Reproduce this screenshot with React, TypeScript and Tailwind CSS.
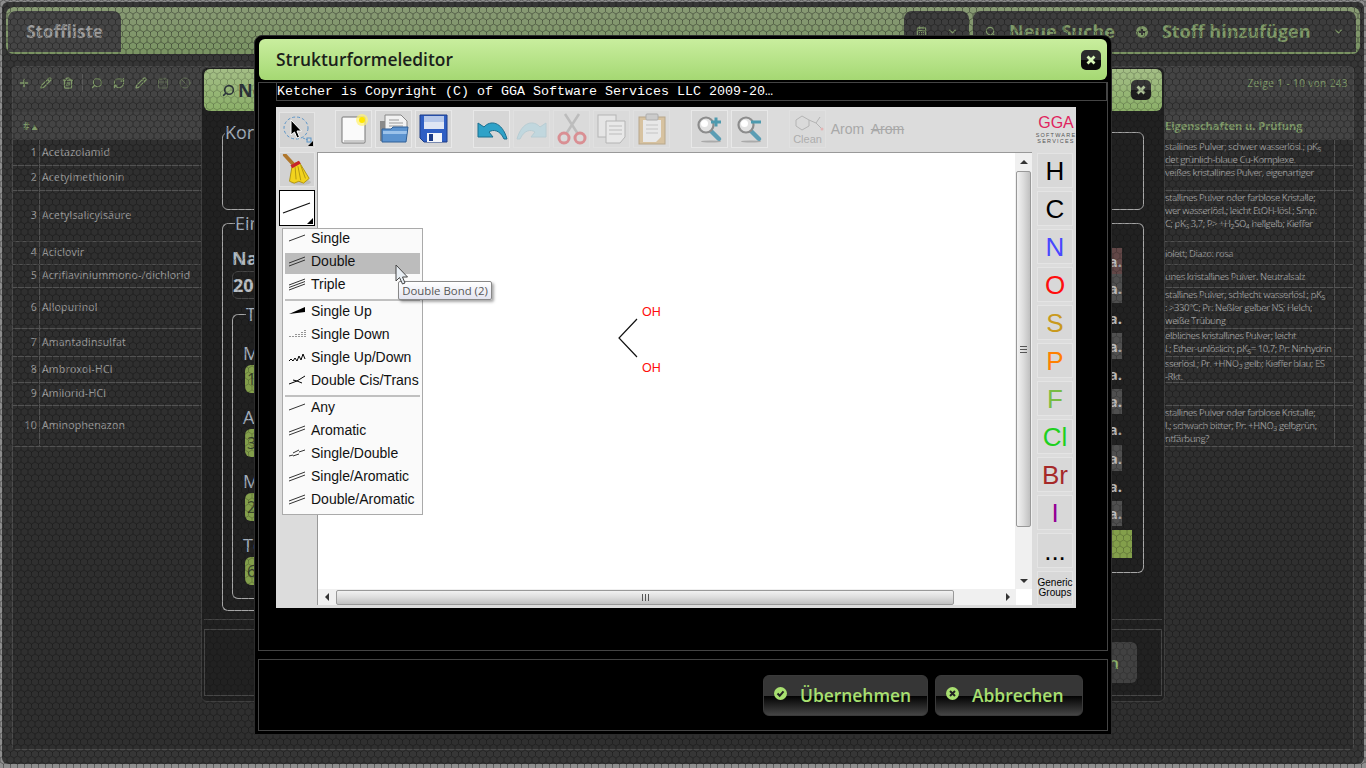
import type { ReactNode } from 'react';
import { Plus, Pencil, Trash2, Search, RefreshCw, CalendarDays, Ban, ChevronDown } from 'lucide-react';

const ROW_HEIGHTS = [26, 25, 51, 23, 23, 41, 28, 26, 23, 41];

const SUBSTANCES = [
  'Acetazolamid',
  'Acetylmethionin',
  'Acetylsalicylsäure',
  'Aciclovir',
  'Acriflaviniummono-/dichlorid',
  'Allopurinol',
  'Amantadinsulfat',
  'Ambroxol-HCl',
  'Amilorid-HCl',
  'Aminophenazon',
];

const Sub = ({ children }: { children: ReactNode }) => (
  <sub className="text-[7px] leading-none">{children}</sub>
);

const PROPERTIES: ReactNode[] = [
  <>
    <div>stallines Pulver; schwer wasserlösl.; pK<Sub>S</Sub></div>
    <div>det grünlich-blaue Cu-Komplexe.</div>
  </>,
  <div>veißes kristallines Pulver, eigenartiger</div>,
  <>
    <div>stallines Pulver oder farblose Kristalle;</div>
    <div>wer wasserlösl.; leicht EtOH-lösl.; Smp:</div>
    <div>C; pK<Sub>S</Sub> 3,7; P&gt; +H<Sub>2</Sub>SO<Sub>4</Sub> hellgelb; Kieffer</div>
  </>,
  <div>iolett; Diazo: rosa</div>,
  <div>unes kristallines Pulver. Neutralsalz</div>,
  <>
    <div>stallines Pulver; schlecht wasserlösl.; pK<Sub>S</Sub></div>
    <div>: &gt;330°C; Pr: Neßler gelber NS; Helch;</div>
    <div>weiße Trübung</div>
  </>,
  <>
    <div>elbliches kristallines Pulver; leicht</div>
    <div>l.; Ether-unlöslich; pK<Sub>S</Sub>= 10,7; Pr: Ninhydrin</div>
  </>,
  <>
    <div>sserlösl.; Pr. +HNO<Sub>3</Sub> gelb; Kieffer blau; ES</div>
    <div>-Rkt.</div>
  </>,
  null,
  <>
    <div>stallines Pulver oder farblose Kristalle;</div>
    <div>l.; schwach bitter; Pr: +HNO<Sub>3</Sub> gelbgrün;</div>
    <div>ntfärbung?</div>
  </>,
];

// rows of the right hand fieldset in the dialog behind the editor
const NA_ROWS = [
  { h: 'h-[26px]', chip: 'bg-[#6a4444]' },
  { h: 'h-[29px]', chip: 'bg-[#505050]' },
  { h: 'h-[30px]', chip: '' },
  { h: 'h-[26px]', chip: 'bg-[#505050]' },
  { h: 'h-[30px]', chip: '' },
  { h: 'h-[25px]', chip: 'bg-[#505050]' },
  { h: 'h-[31px]', chip: '' },
  { h: 'h-[26px]', chip: 'bg-[#505050]' },
  { h: 'h-[30px]', chip: '' },
  { h: 'h-[25px]', chip: 'bg-[#505050]' },
];

const AMOUNTS = [
  { label: 'M', value: '1' },
  { label: 'A', value: '3' },
  { label: 'M', value: '2' },
  { label: 'To', value: '6' },
];

function HexOverlay({ id }: { id: string }) {
  return (
    <svg className="absolute inset-0 w-full h-full pointer-events-none">
      <defs>
        <pattern id={id} patternUnits="userSpaceOnUse" width="7" height="12">
          <path d="M3.5 0 L7 2 V6 L3.5 8 L0 6 V2 Z M3.5 8 V12" fill="none" stroke="#000" strokeOpacity="0.2" strokeWidth="1" />
        </pattern>
      </defs>
      <rect width="100%" height="100%" fill="#505050" fillOpacity="0.3" />
      <rect width="100%" height="100%" fill={`url(#${id})`} />
    </svg>
  );
}

function CloseButton() {
  return (
    <div className="w-[20px] h-[20px] rounded-[5px] bg-[linear-gradient(#2c2c2c_50%,#0a0a0a_50%)] flex items-center justify-center">
      <svg width="12" height="12" viewBox="0 0 12 12">
        <path d="M2.5 2.5 L9.5 9.5 M9.5 2.5 L2.5 9.5" stroke="#d8f5b8" strokeWidth="2.8" />
      </svg>
    </div>
  );
}

function RoundIcon({ kind }: { kind: 'check' | 'x' }) {
  return (
    <svg width="13" height="13" viewBox="0 0 13 13" className="shrink-0 -mt-[3px]">
      <circle cx="6.5" cy="6.5" r="6.5" fill="#a8e070" />
      {kind === 'check' ? (
        <path d="M3.5 6.5 L5.7 8.8 L9.5 4.3" fill="none" stroke="#222" strokeWidth="2" />
      ) : (
        <path d="M4 4 L9 9 M9 4 L4 9" fill="none" stroke="#222" strokeWidth="2" />
      )}
    </svg>
  );
}

function BaseLayer() {
  return (
    <div className="m-[2px] h-[762px] rounded-md bg-[#1c1c1c] px-[4px] pt-[4px] flex flex-col">
      <div className="h-[47px] mt-[1px] rounded-lg bg-linear-to-b from-[#c4e89c] to-[#a8dc78] flex items-stretch pl-[2px] pr-[4px] pt-[4px] pb-[2px]">
        <div className="w-[113px] rounded-t-lg bg-[#3c3c3c] text-[#f0f0f0] text-[17px] font-bold flex items-center justify-center">
          Stoffliste
        </div>
        <div className="flex-1" />
        <div className="w-[65px] rounded-t-lg bg-[#2a2a2a] flex items-center justify-center gap-[20px] text-[#b4e884]">
          <CalendarDays size={11} strokeWidth={2.5} />
          <ChevronDown size={11} strokeWidth={3} />
        </div>
        <div className="w-[383px] ml-[4px] rounded-t-lg bg-[#2a2a2a] flex items-center text-[#b4e884] font-bold text-[18px] pl-[12px]">
          <Search size={11} strokeWidth={2.5} />
          <span className="ml-[13px]">Neue Suche</span>
          <svg width="12" height="12" viewBox="0 0 12 12" className="ml-[21px]">
            <circle cx="6" cy="6" r="6" fill="#b4e884" />
            <path d="M3 6 H9 M6 3 V9" stroke="#222" strokeWidth="2" />
          </svg>
          <span className="ml-[14px]">Stoff hinzufügen</span>
          <ChevronDown size={11} strokeWidth={3} className="ml-auto mr-[12px]" />
        </div>
      </div>

      <div className="mt-[12px] ml-[6px] mr-[6px] h-[684px] border border-[#4a4a4a] rounded-sm flex flex-col">
        <div className="h-[32px] bg-[#3a3a3a] flex items-center pl-[5px] gap-[10px] text-[#b4e884] relative">
          <Plus size={12} strokeWidth={3} />
          <Pencil size={12} strokeWidth={2.5} />
          <Trash2 size={12} strokeWidth={2.5} />
          <div className="w-px h-[18px] bg-[#666666] -mx-[2px]" />
          <Search size={12} strokeWidth={2.5} className="-scale-x-100" />
          <RefreshCw size={12} strokeWidth={2.5} />
          <Pencil size={12} strokeWidth={2.5} />
          <CalendarDays size={12} strokeWidth={2} className="opacity-50" />
          <Ban size={12} strokeWidth={2} className="opacity-50" />
          <span className="ml-auto mr-[5px] text-[10px] tracking-[0.4px] font-normal">Zeige 1 - 10 von 243</span>
        </div>
        <div className="h-[13px] bg-[#303030]" />
        <div className="h-[28px] bg-[#3a3a3a] flex items-center text-[#b4e884] text-[10px] font-semibold">
          <div className="w-[27px] pl-[10px]"># ▴</div>
          <div className="w-[1125px] h-full" />
          <div className="w-[170px] text-[11px] font-bold whitespace-nowrap">Eigenschaften u. Prüfung</div>
        </div>
        <div className="flex-1 flex flex-col bg-[#0e0e0e]">
          {SUBSTANCES.map((name, i) => (
            <div
              key={name}
              style={{ height: ROW_HEIGHTS[i] }}
              className="flex items-stretch border-b border-[#555555] box-border shrink-0"
            >
              <div className="w-[27px] shrink-0 border-r border-[#555555] flex items-center justify-end pr-[2px] text-[10.5px] text-[#eeeeee] tracking-[0.3px]">
                {i + 1}
              </div>
              <div className="w-[1125px] shrink-0 flex items-center pl-[2px] text-[10.5px] text-[#eeeeee] tracking-[0.2px]">
                {name}
              </div>
              <div className={`w-[170px] shrink-0 border-r border-[#555555] flex flex-col ${i === 3 || i === 4 ? 'justify-center' : 'justify-start'} text-[9.5px] leading-[13px] tracking-[-0.45px] text-[#e4e4e4] whitespace-nowrap`}>
                {PROPERTIES[i]}
              </div>
            </div>
          ))}
        </div>
      </div>
    </div>
  );
}

function SubstanceDialog() {
  return (
    <div className="absolute left-[201px] top-[67px] w-[964px] h-[635px] rounded-md border border-[#3a3a3a] bg-[#0e0e0e] flex flex-col px-[2px] pt-[1px]">
      <div className="h-[42px] shrink-0 rounded-md bg-linear-to-b from-[#c9ee9e] to-[#a5d873] flex items-center pl-[18px] pr-[6px] text-[#1f2a33] text-[18px] font-bold">
        <Search size={13} strokeWidth={3} className="-scale-x-100 mr-[3px]" />
        <span>Neuer Stoff</span>
        <div className="ml-auto mr-[5px]">
          <CloseButton />
        </div>
      </div>

      <div className="h-[509px] border-b border-[#444444] px-[18px] pt-[10px] shrink-0 text-[#c8d8ea]">
        <fieldset className="h-[89px] border border-[#cccccc] rounded-md">
          <legend className="ml-[2px] text-[18px] leading-[22px]">Korrektur</legend>
        </fieldset>
        <div className="mt-[2px] flex items-start">
          <fieldset className="w-[478px] h-[399px] border border-r-0 border-[#cccccc] rounded-l-md pl-[9px]">
            <legend className="ml-[3px] text-[18px] leading-[22px]">Ein</legend>
            <div className="mt-[13px] text-[18px] leading-[22px] font-bold text-[#dde8f2]">Na</div>
            <div className="mt-[2px] h-[28px] border border-[#444444] rounded-md text-[18px] font-bold text-[#e8f0f8] flex items-center">
              20
            </div>
            <fieldset className="mt-[4px] h-[296px] border border-r-0 border-[#cccccc] rounded-l-md pl-[10px] pt-[17px]">
              <legend className="ml-[3px] text-[18px] leading-[22px]">To</legend>
              {AMOUNTS.map(a => (
                <div key={a.label + a.value} className="h-[64px]">
                  <div className="text-[18px] leading-[22px]">{a.label}</div>
                  <div className="mt-[1px] ml-[2px] w-[40px] h-[28px] rounded-md bg-[#9ac24a] text-[#30401a] text-[16px] leading-[28px] pl-[2px]">
                    {a.value}
                  </div>
                </div>
              ))}
            </fieldset>
          </fieldset>
          <fieldset className="flex-1 h-[361px] border border-l-0 border-[#cccccc] rounded-r-md pr-[21px] pt-[14px]">
            <legend className="text-[18px] leading-[22px] invisible">Ein</legend>
            {NA_ROWS.map((r, i) => (
              <div key={i} className={`${r.h} flex justify-end items-center`}>
                <div className={`${r.chip} h-full w-[40px] text-right text-[15px] font-bold text-[#e8e8e8] flex items-center justify-end`}>
                  n.a.
                </div>
              </div>
            ))}
            <div className="flex justify-end mt-[4px] -mr-[10px]">
              <div className="w-[40px] h-[28px] bg-[#9ac24a]" />
            </div>
          </fieldset>
        </div>
      </div>

      <div className="mt-[9px] h-[67px] border border-[#444444] flex items-center justify-end pr-[24px]">
        <div className="w-[120px] h-[41px] rounded-md bg-[#3c3c3c] text-[#a8dc78] text-[17px] font-semibold flex items-center justify-end pr-[18px]">
          Speichern
        </div>
      </div>
    </div>
  );
}

function ToolButton({ children, faded, className }: { children: ReactNode; faded?: boolean; className?: string }) {
  return (
    <div className={`w-[37px] h-[38px] border ${faded ? 'border-[#e0e0e0] bg-[#dadada]' : 'border-[#e8e8e8] bg-[#d6d6d6]'} flex items-center justify-center shrink-0 ${className ?? ''}`}>
      <div className={faded ? 'opacity-45 flex flex-col items-center' : 'flex flex-col items-center'}>{children}</div>
    </div>
  );
}

const NewIcon = () => (
  <svg width="30" height="32" viewBox="0 0 30 32">
    <rect x="3" y="4" width="23" height="26" rx="1" fill="#fafafa" stroke="#777" />
    <rect x="5" y="27" width="20" height="2" fill="#ccc" />
    <circle cx="23" cy="7" r="6" fill="#fff176" opacity="0.75" />
    <circle cx="23" cy="7" r="3" fill="#ffe600" />
  </svg>
);

const FolderIcon = () => (
  <svg width="30" height="30" viewBox="0 0 30 30">
    <rect x="1" y="7" width="10" height="20" fill="#8a8a8a" />
    <path d="M6 1 H22 L28 7 V16 H6 Z" fill="#f2f2f2" stroke="#888" />
    <path d="M10 6 H20 M10 9 H24 M10 12 H24" stroke="#999" />
    <path d="M3 15 H12 L14 13 H29 L27 28 H3 Z" fill="#5c93cf" stroke="#2f5f96" />
    <path d="M4 17 H28 L27.5 20 H4 Z" fill="#9cc2ea" />
  </svg>
);

const SaveIcon = () => (
  <svg width="30" height="30" viewBox="0 0 30 30">
    <path d="M1 1 H28 V28 H5 L1 24 Z" fill="#2f5fc4" stroke="#1c3c88" />
    <rect x="5" y="2" width="20" height="13" fill="#dfe6f4" />
    <rect x="5" y="2" width="20" height="6" fill="#b6c8ea" />
    <rect x="8" y="19" width="15" height="9" fill="#f4f6fa" />
    <rect x="10" y="20" width="4" height="7" fill="#1c3c88" />
  </svg>
);

const ArrowIcon = ({ flip, pale }: { flip?: boolean; pale?: boolean }) => (
  <svg width="32" height="26" viewBox="0 0 32 26" className={flip ? '-scale-x-100' : ''}>
    <path
      d="M2 21 L2 7 L8 11 C14 4 26 5 31 23 L28 23 C24 14 17 13 13 16 L17 21 Z"
      fill={pale ? '#a5d5e3' : '#2fa2c8'}
      stroke={pale ? '#8fbdcc' : '#1b6e8e'}
    />
  </svg>
);

const ScissorsIcon = () => (
  <svg width="30" height="32" viewBox="0 0 30 32">
    <path d="M8 1 L21 21 M22 1 L9 21" stroke="#999" strokeWidth="2.5" />
    <circle cx="7" cy="25" r="5" fill="none" stroke="#d9353f" strokeWidth="3" />
    <circle cx="23" cy="25" r="5" fill="none" stroke="#d9353f" strokeWidth="3" />
  </svg>
);

const CopyIcon = () => (
  <svg width="30" height="32" viewBox="0 0 30 32">
    <rect x="1" y="2" width="18" height="22" fill="#f4f4f4" stroke="#888" />
    <path d="M9 8 H28 V24 L23 30 H9 Z" fill="#fafafa" stroke="#888" />
    <path d="M12 13 H25 M12 17 H25 M12 21 H25" stroke="#999" />
  </svg>
);

const PasteIcon = () => (
  <svg width="30" height="32" viewBox="0 0 30 32">
    <rect x="2" y="4" width="26" height="27" fill="#d4a75c" stroke="#8f6a2c" />
    <path d="M6 7 H24 V24 L19 29 H6 Z" fill="#fafafa" />
    <rect x="9" y="1" width="12" height="6" rx="1" fill="#bbb" stroke="#777" />
    <path d="M9 12 H21 M9 16 H21 M9 20 H21" stroke="#aaa" />
  </svg>
);

const ZoomIcon = ({ plus }: { plus?: boolean }) => (
  <svg width="28" height="28" viewBox="0 0 28 28">
    <path d="M15 16 L23 24" stroke="#5a9db4" strokeWidth="4.5" strokeLinecap="round" />
    <ellipse cx="15" cy="26.5" rx="10" ry="1" fill="#aaa" />
    <circle cx="10" cy="10" r="7.5" fill="#e2e2e2" stroke="#8c8c8c" strokeWidth="2.2" />
    <circle cx="8.5" cy="8.5" r="3.5" fill="#fff" />
    <path d="M15 7 H25" stroke="#4e9aae" strokeWidth="3" />
    {plus && <path d="M20 2.5 V11.5" stroke="#4e9aae" strokeWidth="3" />}
  </svg>
);

const CleanIcon = () => (
  <svg width="34" height="19" viewBox="0 0 34 19">
    <path d="M5 6 L11 2 L18 6 V12 L11 16 L5 12 Z" fill="none" stroke="#888" />
    <path d="M18 6 L25 9 L29 3 M25 9 L30 14" fill="none" stroke="#888" />
    <circle cx="31" cy="15" r="1.5" fill="#e88" />
  </svg>
);

const SelectIcon = () => (
  <svg width="32" height="32" viewBox="0 0 32 32">
    <ellipse cx="15" cy="14" rx="12" ry="11" fill="none" stroke="#5d96c8" strokeDasharray="3 2" />
    <path d="M22 24 L27 26" stroke="#5d96c8" strokeDasharray="2 1" />
    <path d="M10 6 L10 21 L13.5 18 L16 24 L18.5 23 L16 17 L20.5 17 Z" fill="#000" stroke="#fff" />
    <rect x="26" y="24" width="4" height="4" fill="none" stroke="#5d96c8" />
    <path d="M32 27 V32 H27 Z" fill="#000" />
  </svg>
);

const BroomIcon = () => (
  <svg width="30" height="32" viewBox="0 0 32 34">
    <ellipse cx="20" cy="30" rx="11" ry="3" fill="#bdbdbd" />
    <path d="M3 1 L13 12" stroke="#b0772c" strokeWidth="4" strokeLinecap="round" />
    <path d="M11 11 L18 8 L29 26 L23 31 L18 29 L13 31 L8 29 Z" fill="#f2d31d" stroke="#b09412" />
    <path d="M14 14 L15 27 M17 13 L20 28 M20 12 L25 26" stroke="#b09412" />
    <path d="M9 12 L18 7 L20 10 L11 15 Z" fill="#c6232c" />
  </svg>
);

function BondIcon({ kind }: { kind: string }) {
  const c = '#333';
  const lines: Record<string, ReactNode> = {
    single: <path d="M1 11 L17 5" stroke={c} />,
    double: <path d="M1 10 L17 4 M1 13 L17 7" stroke={c} />,
    triple: <path d="M1 9 L17 3 M1 11.5 L17 5.5 M1 14 L17 8" stroke={c} />,
    up: <path d="M1 11 L17 4 V9 Z" fill="#000" />,
    down: <path d="M2 11 V10 M5 11 V9.5 M8 11 V8 M11 11 V7 M14 11 V6 M17 11 V4" stroke={c} strokeDasharray="1 1" />,
    updown: <path d="M1 12 L3 10 L5 12 L7 9 L9 12 L11 7 L13 11 L15 5 L17 10" fill="none" stroke="#000" />,
    cistrans: <path d="M1 12 L9 9 L17 4 M5 8 L9 9 L14 11" fill="none" stroke="#000" />,
    singledouble: <path d="M1 11 L5 10 M11 7 L17 5 M5 8 L11 5 M5 11 L11 9" fill="none" stroke={c} />,
  };
  return (
    <svg width="18" height="16" viewBox="0 0 18 16" className="shrink-0">
      {lines[kind]}
    </svg>
  );
}

const BOND_GROUPS = [
  [
    { label: 'Single', icon: 'single' },
    { label: 'Double', icon: 'double', active: true },
    { label: 'Triple', icon: 'triple' },
  ],
  [
    { label: 'Single Up', icon: 'up' },
    { label: 'Single Down', icon: 'down' },
    { label: 'Single Up/Down', icon: 'updown' },
    { label: 'Double Cis/Trans', icon: 'cistrans' },
  ],
  [
    { label: 'Any', icon: 'single' },
    { label: 'Aromatic', icon: 'double' },
    { label: 'Single/Double', icon: 'singledouble' },
    { label: 'Single/Aromatic', icon: 'double' },
    { label: 'Double/Aromatic', icon: 'double' },
  ],
];

const ELEMENTS = [
  { s: 'H', c: 'text-black' },
  { s: 'C', c: 'text-black' },
  { s: 'N', c: 'text-[#4848ff]' },
  { s: 'O', c: 'text-[#ff0d0d]' },
  { s: 'S', c: 'text-[#c99a1d]' },
  { s: 'P', c: 'text-[#ff8000]' },
  { s: 'F', c: 'text-[#78bc42]' },
  { s: 'Cl', c: 'text-[#1fd01f]' },
  { s: 'Br', c: 'text-[#a62929]' },
  { s: 'I', c: 'text-[#940094]' },
  { s: '...', c: 'text-black' },
];

function Ketcher() {
  return (
    <div className="relative ml-[17px] w-[800px] h-[501px] bg-[#dcdcdc] flex flex-col font-['Liberation_Sans',sans-serif] shrink-0">
      <div className="h-[45px] flex items-start pt-[3px] shrink-0">
        <div className="ml-[3px] mt-[2px] w-[36px] h-[36px] bg-[#d2d2d2] border border-[#e4e4e4] flex items-center justify-center shrink-0">
          <SelectIcon />
        </div>
        <div className="ml-[20px] flex gap-[3px]">
          <ToolButton><NewIcon /></ToolButton>
          <ToolButton><FolderIcon /></ToolButton>
          <ToolButton><SaveIcon /></ToolButton>
        </div>
        <div className="ml-[21px] flex gap-[3px]">
          <ToolButton><ArrowIcon /></ToolButton>
          <ToolButton faded><ArrowIcon flip pale /></ToolButton>
          <ToolButton faded><ScissorsIcon /></ToolButton>
          <ToolButton faded><CopyIcon /></ToolButton>
          <ToolButton faded><PasteIcon /></ToolButton>
        </div>
        <div className="ml-[21px] flex gap-[3px]">
          <ToolButton><ZoomIcon plus /></ToolButton>
          <ToolButton><ZoomIcon /></ToolButton>
        </div>
        <div className="ml-[21px] flex gap-[3px] text-[#999999]">
          <ToolButton faded>
            <CleanIcon />
            <span className="text-[11px] leading-[12px] text-[#777777]">Clean</span>
          </ToolButton>
          <div className="w-[37px] h-[38px] flex items-center justify-center text-[14px] text-[#a8a8a8]">Arom</div>
          <div className="w-[37px] h-[38px] flex items-center justify-center text-[14px] text-[#a8a8a8] line-through">Arom</div>
        </div>
        <div className="ml-auto mr-[1px] w-[38px] flex flex-col items-center">
          <span className="text-[16px] leading-[16px] mt-[5px] text-[#e0245e]">GGA</span>
          <span className="text-[5.5px] leading-[6px] mt-[1px] text-[#555555] tracking-[1.2px]">SOFTWARE</span>
          <span className="text-[5.5px] leading-[6px] text-[#555555] tracking-[1.2px]">SERVICES</span>
        </div>
      </div>

      <div className="flex-1 flex min-h-0 pb-[3px]">
        <div className="w-[41px] pl-[3px] flex flex-col shrink-0">
          <div className="w-[36px] h-[35px] bg-[#d2d2d2] border border-[#e4e4e4] flex items-center justify-center">
            <BroomIcon />
          </div>
          <div className="relative mt-[3px] w-[36px] h-[36px] bg-white border border-black flex items-center justify-center">
            <svg width="30" height="14" viewBox="0 0 30 14">
              <path d="M1 12 L28 2" stroke="#111" strokeWidth="1.3" />
            </svg>
            <div className="absolute right-[1px] bottom-[1px] w-0 h-0 border-l-[6px] border-l-transparent border-b-[6px] border-b-black" />
          </div>
        </div>

        <div className="w-[715px] flex flex-col border-l border-t border-[#999999] bg-white shrink-0">
          <div className="flex-1 flex min-h-0">
            <div className="flex-1 relative">
              <svg width="60" height="76" viewBox="0 0 60 76" className="absolute left-[300px] top-[147px]">
                <path d="M19 19 L1 38 L19 57" fill="none" stroke="#111" strokeWidth="1.2" />
              </svg>
              <span className="absolute left-[324px] top-[151px] text-[12.5px] leading-[16px] text-[#ff0d0d]">OH</span>
              <span className="absolute left-[324px] top-[207px] text-[12.5px] leading-[16px] text-[#ff0d0d]">OH</span>
            </div>
            <div className="w-[17px] bg-[#f0f0f0] flex flex-col items-center shrink-0">
              <div className="h-[18px] flex items-center justify-center">
                <div className="w-0 h-0 border-x-[4px] border-x-transparent border-b-[4px] border-b-[#333333]" />
              </div>
              <div className="w-[15px] h-[356px] rounded-[2px] border border-[#999999] bg-linear-to-r from-[#f2f2f2] via-[#dcdcdc] to-[#c0c0c0] flex items-center justify-center">
                <div className="w-[7px] h-[7px] border-y border-[#555555] relative after:absolute after:left-0 after:right-0 after:top-[2px] after:h-px after:bg-[#555555]" />
              </div>
              <div className="flex-1" />
              <div className="h-[16px] flex items-center justify-center">
                <div className="w-0 h-0 border-x-[4px] border-x-transparent border-t-[4px] border-t-[#333333]" />
              </div>
            </div>
          </div>
          <div className="h-[16px] flex items-stretch shrink-0">
            <div className="w-[698px] bg-[#f0f0f0] flex items-center shrink-0">
              <div className="w-[18px] flex items-center justify-center">
                <div className="w-0 h-0 border-y-[4px] border-y-transparent border-r-[4px] border-r-[#333333]" />
              </div>
              <div className="w-[618px] h-[15px] rounded-[2px] border border-[#999999] bg-linear-to-b from-[#f2f2f2] via-[#dcdcdc] to-[#c0c0c0] flex items-center justify-center">
                <div className="w-[7px] h-[7px] border-x border-[#555555] relative after:absolute after:top-0 after:bottom-0 after:left-[2px] after:w-px after:bg-[#555555]" />
              </div>
              <div className="flex-1" />
              <div className="w-[16px] flex items-center justify-center">
                <div className="w-0 h-0 border-y-[4px] border-y-transparent border-l-[4px] border-l-[#333333]" />
              </div>
            </div>
          </div>
        </div>

        <div className="flex-1 pl-[5px] pt-px flex flex-col gap-[3px]">
          {ELEMENTS.map(e => (
            <div
              key={e.s}
              className={`w-[36px] h-[35px] bg-[#d8d8d8] border border-[#e4e4e4] flex items-center justify-center text-[26px] leading-none ${e.c}`}
            >
              {e.s}
            </div>
          ))}
          <div className="w-[36px] h-[34px] bg-[#d8d8d8] border border-[#e4e4e4] flex flex-col items-center justify-center text-[10px] leading-[10px] text-black">
            <span>Generic</span>
            <span>Groups</span>
          </div>
        </div>
      </div>

      <div className="absolute left-[6px] top-[121px] w-[141px] h-[287px] bg-[#fafafa] border border-[#aaaaaa] pt-px px-[2px] flex flex-col gap-[2px] text-[14px] leading-[16px] text-[#111111]">
        {BOND_GROUPS.map((group, g) => (
          <div key={g} className="contents">
            {g > 0 && <div className="h-[2px] bg-[#c0c0c0] shrink-0" />}
            {group.map(item => (
              <div
                key={item.label}
                className={`h-[21px] flex items-start pl-[3px] shrink-0 whitespace-nowrap ${item.active ? 'bg-[#bcbcbc]' : ''}`}
              >
                <BondIcon kind={item.icon} />
                <span className="ml-[5px]">{item.label}</span>
              </div>
            ))}
          </div>
        ))}
      </div>

      <div className="absolute left-[122px] top-[174px] w-[94px] h-[19px] rounded-[2px] border border-[#888888] bg-linear-to-b from-white to-[#e4e5f0] shadow-[2px_2px_3px_rgba(0,0,0,0.35)] flex items-center justify-center text-[11.4px] text-[#575757] font-['Open_Sans',sans-serif] whitespace-nowrap">
        Double Bond (2)
      </div>

      <svg width="14" height="21" viewBox="0 0 14 21" className="absolute left-[119px] top-[157px]">
        <path d="M1 1 V17 L4.5 13.5 L7.5 20 L10 19 L7.5 13 L12.5 13 Z" fill="#e8eef4" stroke="#444" />
      </svg>
    </div>
  );
}

function EditorDialog() {
  return (
    <div className="absolute left-[254px] top-[35px] w-[858px] h-[700px] rounded-t-lg bg-black border border-[#2c2c2c] px-[3px] pt-[3px] flex flex-col">
      <div className="h-[41px] mx-[1px] shrink-0 rounded-md bg-linear-to-b from-[#c9ee9e] to-[#a5d873] flex items-center pl-[17px] pr-[6px] text-[#1b1f1b] text-[17.4px] font-semibold">
        <span>Strukturformeleditor</span>
        <div className="ml-auto">
          <CloseButton />
        </div>
      </div>
      <div className="mt-[2px] h-[569px] border border-[#444444] shrink-0">
        <div className="ml-[17px] h-[18px] border border-[#444444] border-t-0 font-['Liberation_Mono',monospace] text-[13.33px] leading-[18px] text-white whitespace-nowrap overflow-hidden">
          Ketcher is Copyright (C) of GGA Software Services LLC 2009-20…
        </div>
        <div className="mt-[6px]">
          <Ketcher />
        </div>
      </div>
      <div className="mt-[8px] h-[72px] border border-[#444444] flex items-center justify-end gap-[7px] pr-[24px] shrink-0 text-[#a8e070] text-[17.4px] font-semibold">
        <div className="w-[165px] h-[41px] rounded-md border border-[#3a3a3a] bg-[linear-gradient(#363636_50%,#000_50%,#444_100%)] flex items-center pl-[10px] gap-[13px]">
          <RoundIcon kind="check" />
          <span>Übernehmen</span>
        </div>
        <div className="w-[148px] h-[41px] rounded-md border border-[#3a3a3a] bg-[linear-gradient(#363636_50%,#000_50%,#444_100%)] flex items-center pl-[10px] gap-[13px]">
          <RoundIcon kind="x" />
          <span>Abbrechen</span>
        </div>
      </div>
    </div>
  );
}

export default function App() {
  return (
    <div className="relative w-[1366px] h-[768px] overflow-hidden bg-[#d0d0d0] font-['Open_Sans',sans-serif]">
      <BaseLayer />
      <HexOverlay id="hex-base" />
      <SubstanceDialog />
      <HexOverlay id="hex-top" />
      <EditorDialog />
    </div>
  );
}
